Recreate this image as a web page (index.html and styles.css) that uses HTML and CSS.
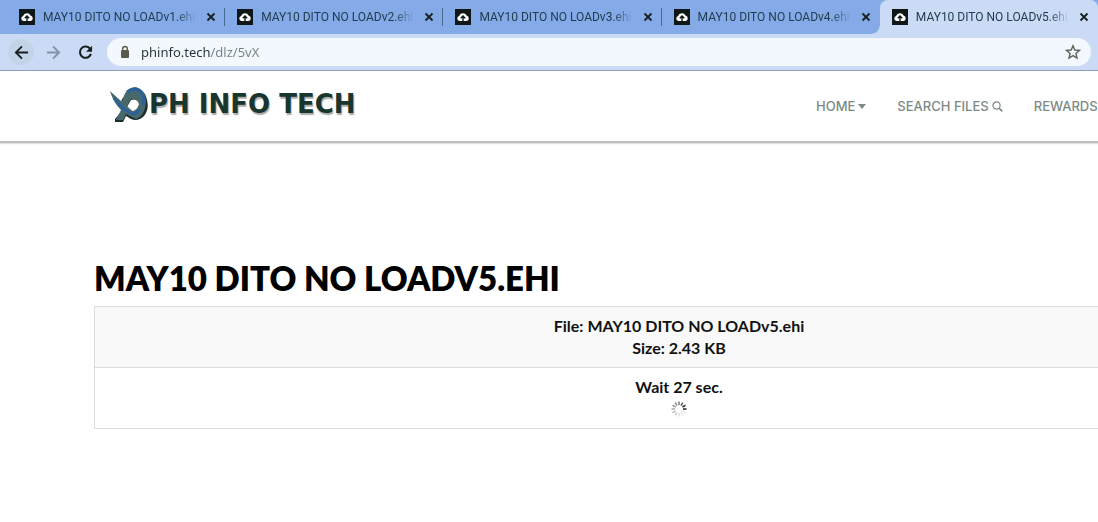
FILE: index.html
```html
<!DOCTYPE html>
<html lang="en">
    <head>
        <meta charset="utf-8" />
        <meta name="viewport" content="width=device-width, initial-scale=1">
        <title>MAY10 DITO NO LOADv5.ehi</title>
        <link rel="stylesheet" href="styles.css">
    </head>
    <body>
        <svg class="defs" width="0" height="0">
            <symbol id="cloud" viewBox="0 0 16 16">
                <rect width="16" height="16" fill="#101817"/>
                <path d="M4.500 12a2.500 2.500 0 0 1-.4-4.900A4 4 0 0 1 11.600 6.600 2.800 2.800 0 0 1 11.800 12z" fill="#fff"/>
                <path d="M8 12.500V7.500M5.800 9.300 8 7l2.200 2.300" fill="none" stroke="#101817" stroke-width="1.400"/>
            </symbol>
            <symbol id="cross" viewBox="0 0 10 10">
                <path d="M1.500 1.500l7 7M8.500 1.500l-7 7" fill="none" stroke="currentColor" stroke-width="1.800"/>
            </symbol>
        </svg>

        <div class="browser">
            <div class="tabs">
                <div class="tab">
                    <svg class="favicon"><use href="#cloud"/></svg>
                    <span class="tab-title">MAY10 DITO NO LOADv1.ehi</span>
                    <button class="close" aria-label="Close tab"><svg><use href="#cross"/></svg></button>
                </div>
                <div class="tab">
                    <svg class="favicon"><use href="#cloud"/></svg>
                    <span class="tab-title">MAY10 DITO NO LOADv2.ehi</span>
                    <button class="close" aria-label="Close tab"><svg><use href="#cross"/></svg></button>
                </div>
                <div class="tab">
                    <svg class="favicon"><use href="#cloud"/></svg>
                    <span class="tab-title">MAY10 DITO NO LOADv3.ehi</span>
                    <button class="close" aria-label="Close tab"><svg><use href="#cross"/></svg></button>
                </div>
                <div class="tab">
                    <svg class="favicon"><use href="#cloud"/></svg>
                    <span class="tab-title">MAY10 DITO NO LOADv4.ehi</span>
                    <button class="close" aria-label="Close tab"><svg><use href="#cross"/></svg></button>
                </div>
                <div class="tab active">
                    <svg class="favicon"><use href="#cloud"/></svg>
                    <span class="tab-title">MAY10 DITO NO LOADv5.ehi</span>
                    <button class="close" aria-label="Close tab"><svg><use href="#cross"/></svg></button>
                </div>
            </div>
            <div class="toolbar">
                <button class="tool back" aria-label="Back">
                    <svg viewBox="0 0 16 16"><path d="M15 8H2.500M8.500 1.500 2 8l6.500 6.500" fill="none" stroke="currentColor" stroke-width="2"/></svg>
                </button>
                <button class="tool forward" aria-label="Forward">
                    <svg viewBox="0 0 16 16"><path d="M1 8h12.500M7.500 1.500 14 8l-6.500 6.500" fill="none" stroke="currentColor" stroke-width="2"/></svg>
                </button>
                <button class="tool" aria-label="Reload">
                    <svg viewBox="0 0 16 16"><path d="M13 4.200A6 6 0 1 0 13.800 9.500" fill="none" stroke="currentColor" stroke-width="2.200"/><path d="M15 .8v6.400H8.600z" fill="currentColor"/></svg>
                </button>
                <div class="address">
                    <svg class="lock" viewBox="0 0 10 14"><rect x="1" y="5" width="8" height="8" rx="1" fill="#5a5a4c"/><path d="M2.700 5.500V3.800a2.300 2.300 0 0 1 4.600 0v1.700" fill="none" stroke="#5a5a4c" stroke-width="1.400"/></svg>
                    <input type="text" class="url" aria-label="Address" value="phinfo.tech/dlz/5vX"/>
                    <button class="star" aria-label="Bookmark this page">
                        <svg viewBox="0 0 16 16"><path d="M8 1.700l1.800 4.300 4.700.4-3.600 3.100 1.100 4.600L8 11.600l-4 2.500 1.100-4.600L1.500 6.400l4.700-.4z" fill="none" stroke="#626258" stroke-width="1.400"/></svg>
                    </button>
                </div>
            </div>
        </div>

        <div class="page">
            <div class="header">
                <div class="container header-row">
                    <a class="logo" href="#">
                        <svg class="logo-mark" viewBox="0 0 40 38">
                            <path d="M14 11Q25-3 36 7Q42 20 35 29Q29 35 22 32L17 29L14 35H6V32L13 24Q11 13 14 11zM22 13L18 20L23 24Q29 25 31 18Q28 11 22 13z" fill="#1b2e2c" fill-rule="evenodd"/>
                            <path d="M1 4L13 15Q16 0 27 0Q36 2 37 14Q36 29 27 32L17 27L14 33H7L12 23Q4 15 1 4zM22 12L18 19L23 24Q28 24 30 17Q28 11 22 12z" fill="#48696c" fill-rule="evenodd"/>
                            <path d="M5 11Q14 24 25 27L31 23M18 5Q25 0 31 4Q36 9 34 18" fill="none" stroke="#2c609c" stroke-width="3"/>
                        </svg>
                        <span class="logo-text">PH INFO TECH</span>
                    </a>
                    <div class="menu">
                        <a href="#">HOME <svg class="caret" viewBox="0 0 8 5"><path d="M0 0h8L4 5z" fill="currentColor"/></svg></a>
                        <a href="#">SEARCH FILES <svg class="search" viewBox="0 0 11 11"><circle cx="4.500" cy="4.500" r="3.600" fill="none" stroke="currentColor" stroke-width="1.200"/><path d="M7 7l3.300 3.300" stroke="currentColor" stroke-width="1.700"/></svg></a>
                        <a href="#">REWARDS</a>
                    </div>
                </div>
            </div>

            <div class="container content">
                <h1>MAY10 DITO NO LOADV5.EHI</h1>
                <table>
                    <tr>
                        <td>File: MAY10 DITO NO LOADv5.ehi<br/>Size: 2.43 KB</td>
                    </tr>
                    <tr>
                        <td>
                            Wait 27 sec.<br/>
                            <svg class="spinner" viewBox="-8 -8 16 16" stroke-width="1.500">
                                <path d="M0-4V-7.500" stroke="#777"/>
                                <path d="M0-4V-7.500" stroke="#555" transform="rotate(30)"/>
                                <path d="M0-4V-7.500" stroke="#333" transform="rotate(60)"/>
                                <path d="M0-4V-7.500" stroke="#222" transform="rotate(90)"/>
                                <path d="M0-4V-7.500" stroke="#eee" transform="rotate(120)"/>
                                <path d="M0-4V-7.500" stroke="#e6e6e6" transform="rotate(150)"/>
                                <path d="M0-4V-7.500" stroke="#ddd" transform="rotate(180)"/>
                                <path d="M0-4V-7.500" stroke="#ccc" transform="rotate(210)"/>
                                <path d="M0-4V-7.500" stroke="#bbb" transform="rotate(240)"/>
                                <path d="M0-4V-7.500" stroke="#aaa" transform="rotate(270)"/>
                                <path d="M0-4V-7.500" stroke="#999" transform="rotate(300)"/>
                                <path d="M0-4V-7.500" stroke="#888" transform="rotate(330)"/>
                            </svg>
                        </td>
                    </tr>
                </table>
            </div>
        </div>
    </body>
</html>
```
FILE: styles.css
```css
* {
    box-sizing: border-box;
}

body {
    margin: 0;
    background-color: white;
    font-family: Lato, "Liberation Sans", sans-serif;
    overflow-x: hidden;
}

svg {
    display: block;
}

button {
    border: none;
    padding: 0;
    background: none;
    color: #17201f;
    cursor: pointer;
}

.defs {
    position: absolute;
}

/* Browser bar */
.browser {
    background-color: #84abe8;
    border-bottom: 1px solid #8e9cb8;
    font-family: "Noto Sans", sans-serif;
}

.tabs {
    display: flex;
    height: 34px;
    padding-left: 7px;
}

.tab {
    flex: 1;
    min-width: 0;
    display: flex;
    align-items: center;
    padding: 0 9px 0 12px;
    background: linear-gradient(#456a91, #456a91) right center / 1px 18px no-repeat;
}

/* rounded foot of the active tab */
.tab:nth-child(4) {
    background: radial-gradient(circle at top left, transparent 7px, #cbdbf5 8px) right bottom / 8px 8px no-repeat;
}

.tab.active {
    background: #cbdbf5;
    border-radius: 8px 8px 0 0;
}

.favicon {
    width: 16px;
    height: 16px;
    margin-right: 8px;
    flex: none;
}

.tab-title {
    flex: 1;
    overflow: hidden;
    white-space: nowrap;
    font-family: Roboto, sans-serif;
    font-size: 12px;
    line-height: 16px;
    color: #203c50;
    -webkit-mask-image: linear-gradient(to left, transparent, black 20px);
    mask-image: linear-gradient(to left, transparent, black 20px);
}

.close {
    margin-left: 10px;
    flex: none;
}

.close svg {
    width: 10px;
    height: 10px;
}

.toolbar {
    display: flex;
    align-items: center;
    height: 36px;
    padding: 0 7px 0 8px;
    background-color: #cbdbf5;
}

.tool {
    width: 26px;
    height: 26px;
    margin-right: 6px;
    display: flex;
    align-items: center;
    justify-content: center;
    border-radius: 50%;
}

.tool svg {
    width: 15px;
    height: 15px;
}

.back {
    background-color: #c3d3e8;
}

.forward {
    color: #8492a6;
}

.address {
    flex: 1;
    display: flex;
    align-items: center;
    height: 28px;
    margin-left: 3px;
    padding: 0 10px 0 13px;
    border-radius: 14px;
    background-color: #f3f8fe;
}

.lock {
    width: 10px;
    height: 14px;
    margin-right: 11px;
}

.url {
    flex: 1;
    padding: 0;
    border: none;
    outline: none;
    font-family: "Noto Sans", sans-serif;
    font-size: 13px;
    line-height: 20px;
    color: transparent;
    background: linear-gradient(to right, #26343a 70px, #75827f 70px);
    -webkit-background-clip: text;
    background-clip: text;
}

.star svg {
    width: 16px;
    height: 16px;
}

/* Site */
.page {
    min-width: 1358px;
}

.container {
    width: 1170px;
    margin: 0 auto;
}

.header {
    border-bottom: 2px solid #bebebe;
    box-shadow: 0 1px 1px #e2e2e2;
}

.header-row {
    display: flex;
    align-items: center;
    height: 70px;
    padding: 0 15px;
}

.logo {
    display: flex;
    align-items: center;
    width: 252px;
    text-decoration: none;
}

.logo-mark {
    width: 40px;
    height: 38px;
}

.logo-text {
    padding-bottom: 4px;
    font-family: "DejaVu Sans", sans-serif;
    font-weight: bold;
    font-size: 26px;
    line-height: 32px;
    color: #19362e;
    text-shadow: 1px 2px 1px #aaa;
    white-space: nowrap;
}

.menu {
    display: flex;
    gap: 31px;
    margin-left: 455px;
}

.menu a {
    display: flex;
    align-items: center;
    gap: 3px;
    color: #7c8a85;
    font-family: Inter, sans-serif;
    font-size: 13px;
    line-height: 20px;
    font-weight: 500;
    text-decoration: none;
    white-space: nowrap;
}

.caret {
    width: 8px;
    height: 5px;
}

.search {
    width: 11px;
    height: 11px;
}

.content {
    padding-top: 115px;
}

h1 {
    margin: 0 0 8px;
    font-size: 33px;
    line-height: 40px;
    font-weight: 800;
    color: black;
}

table {
    width: 100%;
    border-collapse: collapse;
}

td {
    padding: 8px;
    border: 1px solid #ddd;
    font-size: 16px;
    line-height: 22px;
    font-weight: bold;
    text-align: center;
    color: #111;
}

tr:first-child td {
    background-color: #f9f9f9;
}

.spinner {
    width: 16px;
    height: 16px;
    margin: 3px auto;
}
```
